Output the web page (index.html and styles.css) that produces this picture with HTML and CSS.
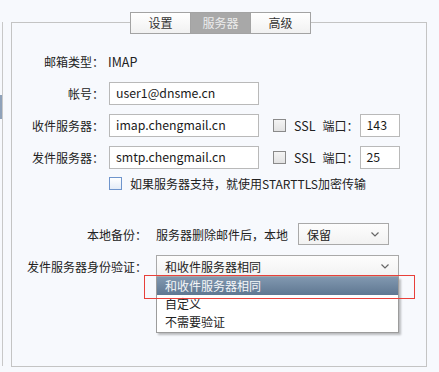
FILE: index.html
```html
<!DOCTYPE html>
<html lang="zh-CN">
<head>
    <meta charset="UTF-8">
    <title>账户设置 - 服务器</title>
    <link rel="stylesheet" href="styles.css">
</head>
<body>
    <div class="window">
        <div class="sidebar"><div class="thumb"></div></div>
        <div class="panel">
            <div class="tabs">
                <span class="tab">设置</span>
                <span class="tab active">服务器</span>
                <span class="tab">高级</span>
            </div>
            <div class="form">
                <div class="row">
                    <span class="label">邮箱类型：</span>
                    <span class="value">IMAP</span>
                </div>
                <div class="row">
                    <span class="label">帐号：</span>
                    <span class="field wide">user1@dnsme.cn</span>
                </div>
                <div class="row">
                    <span class="label">收件服务器：</span>
                    <span class="field wide">imap.chengmail.cn</span>
                    <span class="check"></span>
                    <span class="ssl">SSL</span>
                    <span class="port-label">端口：</span>
                    <span class="field port">143</span>
                </div>
                <div class="row">
                    <span class="label">发件服务器：</span>
                    <span class="field wide">smtp.chengmail.cn</span>
                    <span class="check"></span>
                    <span class="ssl">SSL</span>
                    <span class="port-label">端口：</span>
                    <span class="field port">25</span>
                </div>
                <div class="row tls">
                    <span class="check blue"></span>
                    <span>如果服务器支持，就使用STARTTLS加密传输</span>
                </div>
            </div>
            <div class="options">
                <div class="opt-row">
                    <span class="opt-label">本地备份：</span>
                    <span class="hint">服务器删除邮件后，本地</span>
                    <div class="select small">
                        <span>保留</span>
                        <svg width="8" height="5" viewBox="0 0 8 5"><polyline points="0.5,0.5 4,4 7.5,0.5" fill="none" stroke="#666" stroke-width="1.2"/></svg>
                    </div>
                </div>
                <div class="opt-row">
                    <span class="opt-label">发件服务器身份验证：</span>
                    <div class="select big">
                        <span>和收件服务器相同</span>
                        <svg width="8" height="5" viewBox="0 0 8 5"><polyline points="0.5,0.5 4,4 7.5,0.5" fill="none" stroke="#666" stroke-width="1.2"/></svg>
                        <ul class="dropdown">
                            <li class="selected">和收件服务器相同</li>
                            <li>自定义</li>
                            <li>不需要验证</li>
                        </ul>
                        <div class="mark"></div>
                    </div>
                </div>
            </div>
        </div>
    </div>
</body>
</html>
```

FILE: styles.css
```css
body {
    margin: 0;
    background: #f7f9fd;
    font-family: "Noto Sans CJK SC", "Noto Sans", sans-serif;
    font-size: 12px;
    color: #222;
}
.window {
    display: flex;
    height: 372px;
}
.sidebar {
    width: 2px;
    height: 344px;
    margin-top: 22px;
    border-right: 1px solid #c8c8c8;
}
.thumb {
    height: 24px;
    margin-top: 73px;
    background: #8fa2ba;
}
.panel {
    box-sizing: border-box;
    width: 416px;
    height: 345px;
    margin: 22px 0 0 8px;
    border: 1px solid #c4c4c4;
}
.tabs {
    display: flex;
    margin: -11px 0 0 118px;
}
.tab {
    box-sizing: border-box;
    width: 61px;
    height: 22px;
    line-height: 20px;
    text-align: center;
    font-size: 12px;
    color: #333;
    border: 1px solid #a3a3a3;
    background: linear-gradient(#ffffff, #f1f1f1);
}
.tab + .tab {
    margin-left: -1px;
}
.tab.active {
    background: #a8a8a8;
    color: #ececec;
}
.form {
    display: flex;
    flex-direction: column;
    gap: 9px;
    margin-top: 16px;
}
.row {
    display: flex;
    align-items: center;
    height: 23px;
}
.label {
    width: 92px;
    text-align: right;
}
.value {
    margin-left: 4px;
    font-size: 12.5px;
}
.field {
    box-sizing: border-box;
    height: 23px;
    line-height: 21px;
    padding: 0 6px;
    margin-left: 5px;
    border: 1px solid #b9b9b9;
    background: #fff;
    font-size: 12.3px;
    color: #1a1a1a;
}
.field.wide {
    width: 150px;
}
.field.port {
    width: 40px;
    margin-left: 1px;
}
.check {
    box-sizing: border-box;
    width: 13px;
    height: 13px;
    margin-left: 14px;
    border: 1px solid #8a8a8a;
    background: linear-gradient(#f4f4f4, #e2e2e2);
}
.ssl {
    margin-left: 8px;
    font-size: 12.5px;
}
.port-label {
    margin-left: 7px;
}
.row.tls {
    height: 17px;
    margin-top: -3px;
    padding-left: 97px;
}
.check.blue {
    margin: 0 8px 0 0;
    border-color: #6f95cc;
    background: linear-gradient(#ffffff, #e4ecf7);
}
.options {
    display: flex;
    flex-direction: column;
    gap: 10px;
    margin-top: 31px;
}
.opt-row {
    display: flex;
    align-items: center;
    height: 22px;
}
.opt-label {
    width: 135px;
    text-align: right;
}
.hint {
    margin-left: 9px;
}
.select {
    position: relative;
    box-sizing: border-box;
    display: flex;
    align-items: center;
    justify-content: space-between;
    height: 22px;
    padding: 0 9px 0 8px;
    border: 1px solid #a9a9a9;
    background: linear-gradient(#fdfdfd, #f2f2f2);
}
.select.small {
    width: 91px;
    margin-left: 10px;
}
.select.big {
    width: 243px;
    margin-left: 9px;
}
.dropdown {
    position: absolute;
    top: calc(100% + 1px);
    left: -1px;
    box-sizing: border-box;
    width: 243px;
    margin: 0;
    padding: 0 0 1px;
    list-style: none;
    border: 1px solid #9c9c9c;
    border-top: none;
    background: #fff;
    box-shadow: 2px 2px 2px rgba(0, 0, 0, 0.25);
}
.dropdown li {
    height: 18px;
    line-height: 18px;
    padding-left: 8px;
}
.dropdown li.selected {
    background: linear-gradient(#8198b0, #5f7791);
    color: #f4f6f8;
}
.mark {
    position: absolute;
    top: 19px;
    left: -13px;
    width: 271px;
    height: 24px;
    box-sizing: border-box;
    border: 1px solid #e8403a;
}
```
